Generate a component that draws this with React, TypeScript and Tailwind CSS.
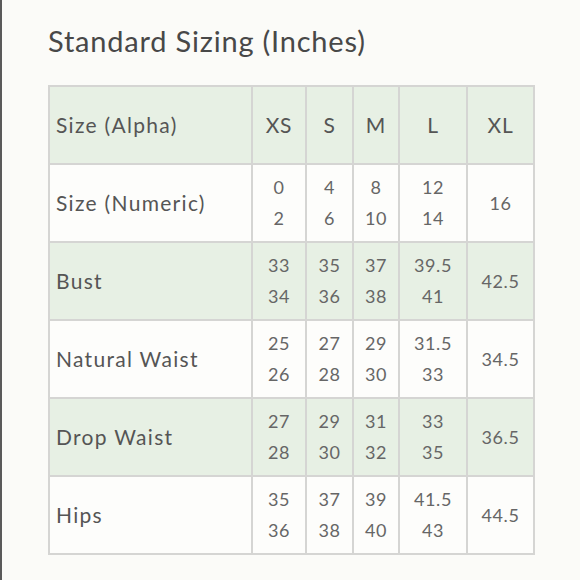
const ROWS: { label: string; vals: (string[] | string)[]; green: boolean }[] = [
  { label: 'Size (Numeric)', vals: [['0', '2'], ['4', '6'], ['8', '10'], ['12', '14'], '16'], green: false },
  { label: 'Bust', vals: [['33', '34'], ['35', '36'], ['37', '38'], ['39.5', '41'], '42.5'], green: true },
  { label: 'Natural Waist', vals: [['25', '26'], ['27', '28'], ['29', '30'], ['31.5', '33'], '34.5'], green: false },
  { label: 'Drop Waist', vals: [['27', '28'], ['29', '30'], ['31', '32'], ['33', '35'], '36.5'], green: true },
  { label: 'Hips', vals: [['35', '36'], ['37', '38'], ['39', '40'], ['41.5', '43'], '44.5'], green: false },
];

const SIZES = ['XS', 'S', 'M', 'L', 'XL'];
const COLS = ['w-[203px]', 'w-[54px]', 'w-[47px]', 'w-[46px]', 'w-[68px]', 'w-[67px]'];

export default function App() {
  return (
    <div className="w-[580px] h-[580px] bg-[#fbfbf8] border-l-2 border-[#5a5a5a] pl-[46px] pt-[24px] font-['Lato',sans-serif] text-[#555]">
      <h1 className="text-[29px] leading-[34px] tracking-[0.8px] text-[#484848]">Standard Sizing (Inches)</h1>
      <table className="mt-[27px] border-collapse table-fixed w-[485px]">
        <colgroup>
          {COLS.map((c, i) => (
            <col key={i} className={c} />
          ))}
        </colgroup>
        <tbody>
          <tr className="h-[78px] bg-[#e7f0e4]">
            <td className="border-2 border-[#d5d5d3] pl-[6px] text-[21px] tracking-[1.3px]">Size (Alpha)</td>
            {SIZES.map((s) => (
              <td key={s} className="border-2 border-[#d5d5d3] text-center text-[21px] tracking-[0.8px]">
                {s}
              </td>
            ))}
          </tr>
          {ROWS.map((r) => (
            <tr key={r.label} className={`h-[78px] ${r.green ? 'bg-[#e7f0e4]' : 'bg-[#fdfdfb]'}`}>
              <td className="border-2 border-[#d5d5d3] pl-[6px] text-[21px] tracking-[1.3px]">{r.label}</td>
              {r.vals.map((v, i) => (
                <td key={i} className="border-2 border-[#d5d5d3] text-center text-[18px] tracking-[0.6px] text-[#666]">
                  {Array.isArray(v) ? (
                    <div className="flex flex-col leading-[31px]">
                      <span>{v[0]}</span>
                      <span>{v[1]}</span>
                    </div>
                  ) : (
                    v
                  )}
                </td>
              ))}
            </tr>
          ))}
        </tbody>
      </table>
    </div>
  );
}
